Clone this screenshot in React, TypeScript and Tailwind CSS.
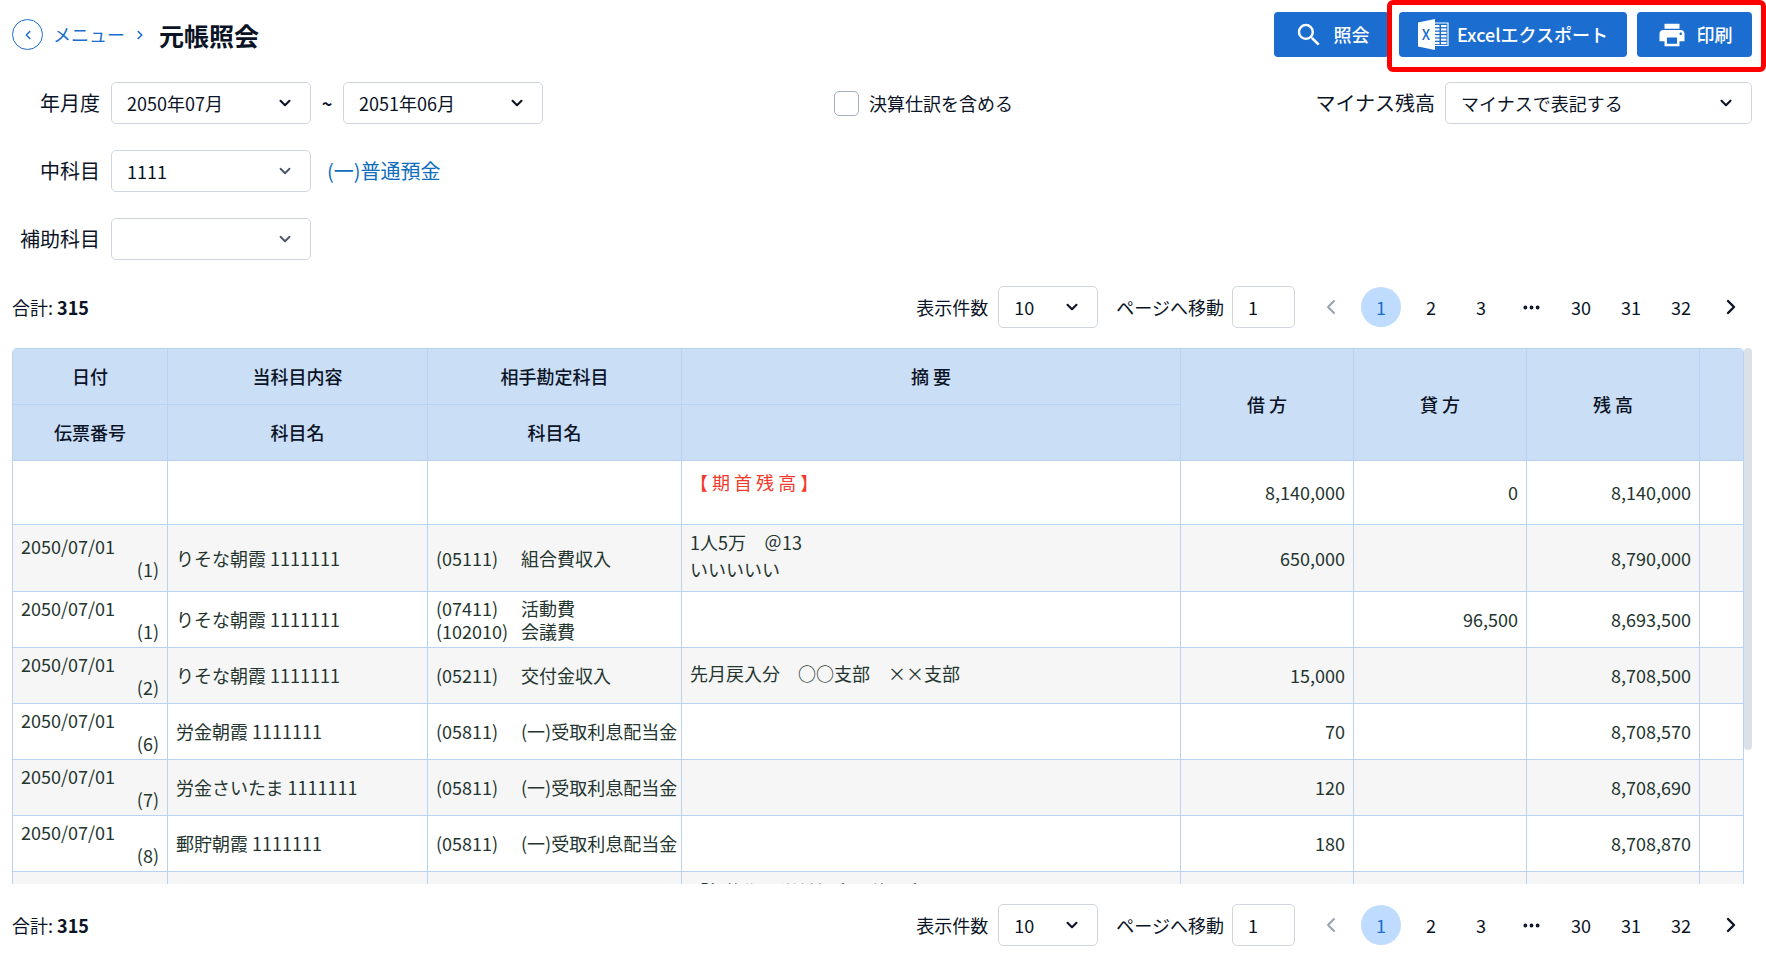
import React, { useId } from "react";
import { ChevronDown, ChevronLeft, ChevronRight, Ellipsis } from "lucide-react";
import { MdPrint, MdSearch } from "react-icons/md";
import clsx from "clsx";

/* ================= DATA ================= */

type LedgerRow = {
  date?: string;
  no?: string;
  account?: string;
  counter?: [string, string][];
  note?: string[];
  opening?: boolean;
  debit?: string;
  credit?: string;
  balance?: string;
  height: string;
};

const INTEREST: [string, string][] = [["(05811)", "(一)受取利息配当金"]];

const ROWS: LedgerRow[] = [
  {
    note: ["【 期 首 残 高 】"],
    opening: true,
    debit: "8,140,000",
    credit: "0",
    balance: "8,140,000",
    height: "h-16",
  },
  {
    date: "2050/07/01",
    no: "(1)",
    account: "りそな朝霞 1111111",
    counter: [["(05111)", "組合費収入"]],
    note: ["1人5万　＠13", "いいいいい"],
    debit: "650,000",
    balance: "8,790,000",
    height: "h-[67px]",
  },
  {
    date: "2050/07/01",
    no: "(1)",
    account: "りそな朝霞 1111111",
    counter: [
      ["(07411)", "活動費"],
      ["(102010)", "会議費"],
    ],
    credit: "96,500",
    balance: "8,693,500",
    height: "h-14",
  },
  {
    date: "2050/07/01",
    no: "(2)",
    account: "りそな朝霞 1111111",
    counter: [["(05211)", "交付金収入"]],
    note: ["先月戻入分　○○支部　××支部"],
    debit: "15,000",
    balance: "8,708,500",
    height: "h-14",
  },
  {
    date: "2050/07/01",
    no: "(6)",
    account: "労金朝霞 1111111",
    counter: INTEREST,
    debit: "70",
    balance: "8,708,570",
    height: "h-14",
  },
  {
    date: "2050/07/01",
    no: "(7)",
    account: "労金さいたま 1111111",
    counter: INTEREST,
    debit: "120",
    balance: "8,708,690",
    height: "h-14",
  },
  {
    date: "2050/07/01",
    no: "(8)",
    account: "郵貯朝霞 1111111",
    counter: INTEREST,
    debit: "180",
    balance: "8,708,870",
    height: "h-14",
  },
  {
    note: ["「転換期の労働組合」他　金5万"],
    height: "h-11",
  },
];

/* ================= ICONS ================= */

function ExcelIcon() {
  return (
    <svg viewBox="0 0 31 31" className="h-[31px] w-[31px] shrink-0" aria-hidden="true">
      <path d="M0 3.5 17 0v31L0 27.5z" fill="#fff" />
      <path d="M17 4h13v22.5H17" fill="none" stroke="#fff" strokeWidth="1.2" />
      {[6, 9.4, 12.8, 16.2, 19.6, 23].map((y) => (
        <g key={y} fill="#fff">
          <rect x="17" y={y} width="4.5" height="2.1" />
          <rect x="23" y={y} width="5.5" height="2.1" />
        </g>
      ))}
      <text
        x="8"
        y="20.5"
        textAnchor="middle"
        fontSize="14"
        fontFamily="'Noto Sans CJK JP', sans-serif"
        fill="#1b6dd0"
      >
        X
      </text>
    </svg>
  );
}

/* ================= CONTROLS ================= */

function ActionButton({
  icon,
  children,
  className,
}: {
  icon: React.ReactNode;
  children: React.ReactNode;
  className?: string;
}) {
  return (
    <button
      type="button"
      className={clsx(
        "flex h-[45px] items-center justify-center rounded-[4px] bg-[#1b6dd0] font-medium whitespace-nowrap text-white",
        className
      )}
    >
      {icon}
      {children}
    </button>
  );
}

function Select({
  id,
  value,
  width,
  muted,
}: {
  id: string;
  value: string;
  width: string;
  muted?: boolean;
}) {
  return (
    <div className={clsx("relative shrink-0", width)}>
      <select
        id={id}
        defaultValue={value}
        className="h-[42px] w-full appearance-none rounded-[5px] border border-[#d0d5de] bg-white pl-[15px] pr-10 outline-none"
      >
        <option value={value}>{value}</option>
      </select>
      <ChevronDown
        size={18}
        strokeWidth={muted ? 2.4 : 2.8}
        className={clsx(
          "pointer-events-none absolute top-3 right-[17px]",
          muted ? "text-[#475569]" : "text-[#0b1426]"
        )}
      />
    </div>
  );
}

function FieldLabel({ htmlFor, children }: { htmlFor: string; children: React.ReactNode }) {
  return (
    <label htmlFor={htmlFor} className="w-22 shrink-0 text-right text-xl whitespace-nowrap">
      {children}
    </label>
  );
}

function Pager() {
  const id = useId();
  const page = "flex h-10 w-10 items-center justify-center rounded-full";

  return (
    <div className="flex items-center pr-px whitespace-nowrap">
      <p>
        合計: <strong className="font-bold">315</strong>
      </p>
      <label htmlFor={`${id}-size`} className="mr-2.5 ml-auto">
        表示件数
      </label>
      <Select id={`${id}-size`} value="10" width="w-[100px]" />
      <label htmlFor={`${id}-page`} className="mr-2 ml-[18px]">
        ページへ移動
      </label>
      <input
        id={`${id}-page`}
        type="text"
        defaultValue="1"
        className="h-[42px] w-[63px] rounded-[5px] border border-[#d0d5de] bg-white px-[15px] outline-none"
      />
      <nav aria-label="ページ" className="ml-4 flex items-center gap-2.5">
        <button type="button" aria-label="前へ" className={clsx(page, "text-[#98a2b3]")}>
          <ChevronLeft size={24} />
        </button>
        <button type="button" aria-current="page" className={clsx(page, "bg-[#bfdbfe] text-[#1b6dd0]")}>
          1
        </button>
        <button type="button" className={page}>2</button>
        <button type="button" className={page}>3</button>
        <span className={page}>
          <Ellipsis size={21} strokeWidth={2.4} />
        </span>
        <button type="button" className={page}>30</button>
        <button type="button" className={page}>31</button>
        <button type="button" className={page}>32</button>
        <button type="button" aria-label="次へ" className={page}>
          <ChevronRight size={24} strokeWidth={2.4} />
        </button>
      </nav>
    </div>
  );
}

/* ================= TABLE ================= */

function LedgerTable() {
  const th = "border border-[#b9d4f3] font-medium";
  const td = "border border-[#b9d4f3] px-2";

  return (
    <div className="flex h-[536px]">
      <div className="min-w-0 flex-1 overflow-y-auto rounded-t-[5px] [scrollbar-width:none]">
        <table className="w-full table-fixed border-collapse">
          <colgroup>
            <col className="w-[155px]" />
            <col className="w-[260px]" />
            <col className="w-[254px]" />
            <col />
            <col className="w-[173px]" />
            <col className="w-[173px]" />
            <col className="w-[173px]" />
            <col className="w-[44px]" />
          </colgroup>
          <thead className="bg-[#cadef6]">
            <tr className="h-14">
              <th className={th}>日付</th>
              <th className={th}>当科目内容</th>
              <th className={th}>相手勘定科目</th>
              <th className={th}>摘 要</th>
              <th className={th} rowSpan={2}>借 方</th>
              <th className={th} rowSpan={2}>貸 方</th>
              <th className={th} rowSpan={2}>残 高</th>
              <th className={th} rowSpan={2} />
            </tr>
            <tr className="h-14">
              <th className={th}>伝票番号</th>
              <th className={th}>科目名</th>
              <th className={th}>科目名</th>
              <th className={th} />
            </tr>
          </thead>
          <tbody className="text-[#24352f]">
            {ROWS.map((row, i) => (
              <tr key={i} className={clsx(row.height, "even:bg-[#f6f6f6]")}>
                <td className={clsx(td, "leading-[23px]")}>
                  <div>{row.date}</div>
                  <div className="text-right">{row.no}</div>
                </td>
                <td className={td}>{row.account}</td>
                <td className={clsx(td, "leading-[23px] whitespace-nowrap")}>
                  {row.counter?.map(([code, name]) => (
                    <div key={code} className="flex">
                      <span className="w-[85px] shrink-0">{code}</span>
                      <span>{name}</span>
                    </div>
                  ))}
                </td>
                <td className={clsx(td, row.opening ? "pb-5 text-[#f23a2e]" : "pb-1")}>
                  {row.note?.map((line) => (
                    <div key={line}>{line}</div>
                  ))}
                </td>
                <td className={clsx(td, "text-right")}>{row.debit}</td>
                <td className={clsx(td, "text-right")}>{row.credit}</td>
                <td className={clsx(td, "text-right")}>{row.balance}</td>
                <td className={td} />
              </tr>
            ))}
          </tbody>
        </table>
      </div>
      <div className="w-2 shrink-0">
        <div className="h-3/4 rounded-full bg-[#dce1e9]" />
      </div>
    </div>
  );
}

/* ================= PAGE ================= */

export default function App() {
  return (
    <main className="bg-white pt-3 pr-3.5 pb-1.5 pl-3 font-['Noto_Sans_CJK_JP',sans-serif] text-[18px] leading-[27px] text-[#0b1426]">
      <header className="flex items-center">
        <nav aria-label="パンくず" className="flex items-center text-[#1b6dd0]">
          <button
            type="button"
            aria-label="戻る"
            className="flex h-[31px] w-[31px] items-center justify-center rounded-full border border-[#1b6dd0]"
          >
            <ChevronLeft size={14} strokeWidth={2.5} />
          </button>
          <a href="#menu" className="ml-2.5">メニュー</a>
          <ChevronRight size={14} strokeWidth={2.8} className="mr-3 ml-2" />
        </nav>
        <h1 className="text-[25px] leading-[36px] font-bold">元帳照会</h1>

        <div className="ml-auto flex gap-2.5">
          <ActionButton icon={<MdSearch size={30} />} className="w-[115px] gap-2.5">
            照会
          </ActionButton>
          <div className="relative flex gap-2.5">
            <ActionButton icon={<ExcelIcon />} className="w-[228px] gap-2">
              Excelエクスポート
            </ActionButton>
            <ActionButton icon={<MdPrint size={30} />} className="w-[115px] gap-2.5">
              印刷
            </ActionButton>
            <div className="pointer-events-none absolute -top-3 -right-3.5 -bottom-[15px] -left-3 rounded-[6px] border-[5px] border-[#ff0000]" />
          </div>
        </div>
      </header>

      <section className="mt-[25px] flex flex-col gap-[26px]">
        <div className="flex items-center">
          <FieldLabel htmlFor="from">年月度</FieldLabel>
          <div className="ml-[11px] flex items-center">
            <Select id="from" value="2050年07月" width="w-[200px]" />
            <span className="w-8 text-center font-bold">~</span>
            <Select id="to" value="2051年06月" width="w-[200px]" />
          </div>
          <div className="ml-[291px] flex items-center gap-2.5 whitespace-nowrap">
            <input
              id="closing"
              type="checkbox"
              className="h-[25px] w-[25px] appearance-none rounded-[5px] border border-[#a3afc0] bg-white checked:bg-[#1b6dd0]"
            />
            <label htmlFor="closing">決算仕訳を含める</label>
          </div>
          <div className="ml-auto flex items-center gap-2.5 whitespace-nowrap">
            <label htmlFor="minus" className="text-xl">
              マイナス残高
            </label>
            <Select id="minus" value="マイナスで表記する" width="w-[307px]" />
          </div>
        </div>

        <div className="flex items-center">
          <FieldLabel htmlFor="account">中科目</FieldLabel>
          <div className="ml-[11px] flex items-center gap-4">
            <Select id="account" value="1111" width="w-[200px]" muted />
            <span className="text-xl text-[#0e6ebd]">(一)普通預金</span>
          </div>
        </div>

        <div className="flex items-center">
          <FieldLabel htmlFor="sub">補助科目</FieldLabel>
          <div className="ml-[11px]">
            <Select id="sub" value="" width="w-[200px]" muted />
          </div>
        </div>
      </section>

      <div className="mt-[26px] flex flex-col gap-5">
        <Pager />
        <LedgerTable />
        <Pager />
      </div>
    </main>
  );
}
